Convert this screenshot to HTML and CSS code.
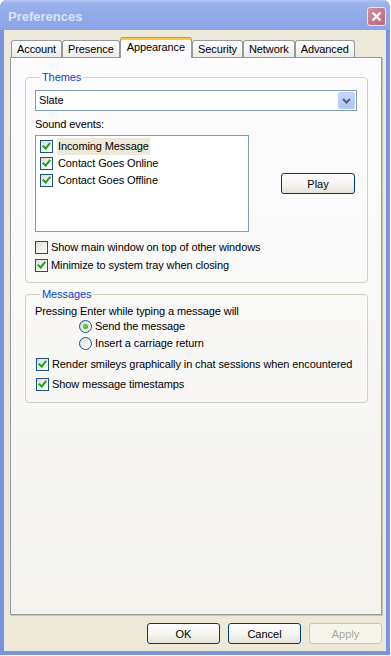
FILE: index.html
```html
<!DOCTYPE html>
<html>

<head>
    <meta charset="UTF-8">
    <title>Preferences</title>
    <link rel="stylesheet" href="styles.css">
</head>

<body>
    <div class="window">
        <div class="titlebar">
            <span class="title">Preferences</span>
            <span class="close">
                <svg width="11" height="11" viewBox="0 0 11 11">
                    <path d="M1.5 1.5 L9.5 9.5 M9.5 1.5 L1.5 9.5" stroke="#fff" stroke-width="2.2" fill="none"/>
                </svg>
            </span>
        </div>

        <div class="client">
            <nav class="tabs">
                <span class="tab">Account</span>
                <span class="tab">Presence</span>
                <span class="tab active">Appearance</span>
                <span class="tab">Security</span>
                <span class="tab">Network</span>
                <span class="tab">Advanced</span>
            </nav>

            <section class="panel">
                <fieldset class="group themes">
                    <legend>Themes</legend>
                    <div class="select">
                        <span>Slate</span>
                        <span class="drop">
                            <svg width="9" height="6" viewBox="0 0 9 6">
                                <path d="M1 1 L4.5 4.5 L8 1" stroke="#4d6185" stroke-width="2" fill="none"/>
                            </svg>
                        </span>
                    </div>
                    <div class="label">Sound events:</div>
                    <div class="sound-row">
                        <ul class="listbox">
                            <li><span class="check on"></span><span class="item sel">Incoming Message</span></li>
                            <li><span class="check on"></span><span class="item">Contact Goes Online</span></li>
                            <li><span class="check on"></span><span class="item">Contact Goes Offline</span></li>
                        </ul>
                        <button class="btn play">Play</button>
                    </div>
                    <label class="opt first"><span class="check"></span>Show main window on top of other windows</label>
                    <label class="opt"><span class="check on"></span>Minimize to system tray when closing</label>
                </fieldset>

                <fieldset class="group messages">
                    <legend>Messages</legend>
                    <div class="label">Pressing Enter while typing a message will</div>
                    <div class="radios">
                        <label class="radio-row"><span class="radio on"></span>Send the message</label>
                        <label class="radio-row"><span class="radio"></span>Insert a carriage return</label>
                    </div>
                    <label class="opt wide first"><span class="check on"></span>Render smileys graphically in chat sessions when encountered</label>
                    <label class="opt wide"><span class="check on"></span>Show message timestamps</label>
                </fieldset>
            </section>

            <div class="actions">
                <button class="btn">OK</button>
                <button class="btn">Cancel</button>
                <button class="btn" disabled>Apply</button>
            </div>
        </div>
    </div>
</body>

</html>
```

FILE: styles.css
```css
body {
    margin: 0;
    background-color: #fff;
    font-family: "Liberation Sans", Arial, sans-serif;
    font-size: 11px;
    line-height: 13px;
    letter-spacing: -0.1px;
    color: #000;
}

.window {
    width: 390px;
    height: 655px;
    box-sizing: border-box;
    background-color: #7b92df;
    border-radius: 7px 7px 0 0;
    display: flex;
    flex-direction: column;
}

.titlebar {
    height: 30px;
    box-sizing: border-box;
    flex: none;
    display: flex;
    align-items: center;
    justify-content: space-between;
    padding: 3px 4px 0 8px;
    border-radius: 7px 7px 0 0;
    background: linear-gradient(to bottom, #b3c6f2 0, #9bb3ec 3px, #93acea 40%, #8aa4e6 100%);
}

.title {
    font-weight: bold;
    font-size: 13px;
    letter-spacing: 0;
    color: #d8e3f8;
}

.close {
    width: 19px;
    height: 19px;
    box-sizing: border-box;
    border: 1px solid #efe2ee;
    border-radius: 3px;
    background: linear-gradient(135deg, #d08d98, #b9697a);
    display: flex;
    align-items: center;
    justify-content: center;
}

.client {
    flex: 1;
    margin: 0 4px 4px 4px;
    background-color: #ece9d8;
    padding: 7px 4px 7px 6px;
    display: flex;
    flex-direction: column;
}

/* tabs */

.tabs {
    display: flex;
    align-items: flex-end;
    height: 20px;
    padding-left: 1px;
}

.tab {
    height: 17px;
    box-sizing: border-box;
    padding: 2px 5px 0 5px;
    border: 1px solid #919b9c;
    border-bottom: none;
    border-radius: 3px 3px 0 0;
    background: linear-gradient(to bottom, #fff, #ecebe6);
    text-align: center;
    white-space: nowrap;
}

.tab.active {
    height: 21px;
    margin-bottom: -1px;
    padding: 3px 6px 0 6px;
    position: relative;
    z-index: 1;
    border-top: 1px solid #e68b2c;
    box-shadow: inset 0 2px 0 #ffc73c;
    background: #fcfcfe;
}

.panel {
    flex: 1;
    border: 1px solid #919b9c;
    background: linear-gradient(to bottom, #fcfcfe, #f4f3ee);
    box-shadow: 1px 1px 0 #c8c4b3;
    padding: 13px 13px 0 14px;
}

/* group boxes */

.group {
    margin: 0;
    border: 1px solid #d0d0bf;
    border-radius: 4px;
    min-width: 0;
}

.group legend {
    color: #0046d5;
    padding: 0 2px;
    margin-left: 5px;
}

.themes {
    padding: 6px 10px 8px 9px;
}

.messages {
    margin-top: 5px;
    padding: 4px 6px 8px 9px;
}

.select {
    height: 21px;
    box-sizing: border-box;
    border: 1px solid #7f9db9;
    background-color: #fff;
    display: flex;
    align-items: center;
    justify-content: space-between;
    padding: 0 1px 0 3px;
}

.drop {
    width: 17px;
    height: 17px;
    box-sizing: border-box;
    border: 1px solid #bccefa;
    border-radius: 2px;
    background: linear-gradient(to bottom, #c6d6fc, #b1c6f6);
    display: flex;
    align-items: center;
    justify-content: center;
}

.themes .label {
    margin-top: 7px;
}

.sound-row {
    display: flex;
    align-items: flex-start;
    margin-top: 4px;
}

.listbox {
    list-style: none;
    margin: 0;
    width: 214px;
    height: 97px;
    box-sizing: border-box;
    border: 1px solid #7f9db9;
    background-color: #fff;
    padding: 2px 0 0 4px;
}

.listbox li {
    height: 17px;
    display: flex;
    align-items: center;
}

.item {
    margin-left: 4px;
    padding: 2px 1px;
}

.item.sel {
    background-color: #ece9d8;
}

/* checkbox + radio */

.check,
.radio {
    width: 13px;
    height: 13px;
    box-sizing: border-box;
    border: 1px solid #1c5180;
    background: linear-gradient(135deg, #dcdcd7, #fff);
    position: relative;
    flex: none;
}

.check.on::after {
    content: "";
    position: absolute;
    left: 3px;
    top: 0px;
    width: 3px;
    height: 6px;
    border: solid #21a121;
    border-width: 0 2px 2px 0;
    transform: rotate(40deg);
}

.radio {
    border-radius: 50%;
}

.radio.on::after {
    content: "";
    position: absolute;
    left: 3px;
    top: 3px;
    width: 5px;
    height: 5px;
    border-radius: 50%;
    background: radial-gradient(circle at 40% 40%, #5de05d, #1f9a1f);
}

.opt {
    display: flex;
    align-items: center;
    height: 18px;
    gap: 3px;
    white-space: nowrap;
}

.opt.first {
    margin-top: 6px;
}

.messages .label {
    height: 13px;
}

.radios {
    margin-left: 44px;
}

.radio-row {
    display: flex;
    align-items: center;
    height: 17px;
    gap: 3px;
}

.opt.wide {
    height: 20px;
    padding-left: 1px;
}

.opt.wide.first {
    margin-top: 2px;
}

/* buttons */

.btn {
    width: 73px;
    height: 21px;
    box-sizing: border-box;
    border: 1px solid #003c74;
    border-radius: 3px;
    background: linear-gradient(to bottom, #fff 0, #f3f2ee 60%, #e4e1d6 100%);
    font-family: inherit;
    font-size: 11px;
    color: #000;
    padding: 0;
}

.btn:disabled {
    border-color: #c9c7ba;
    background: #f5f4ea;
    color: #aca899;
}

.play {
    width: 74px;
    margin: 38px 0 0 32px;
}

.actions {
    margin-top: 8px;
    display: flex;
    justify-content: flex-end;
    gap: 8px;
}
```
